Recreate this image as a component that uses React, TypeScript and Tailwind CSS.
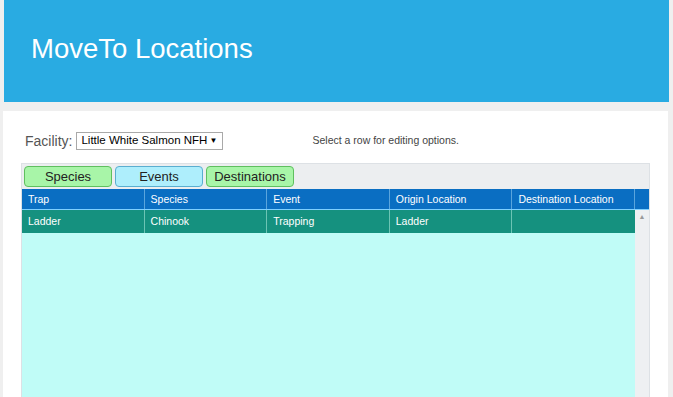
import React from "react";

const COLUMNS = ["Trap", "Species", "Event", "Origin Location", "Destination Location"];
const ROWS = [["Ladder", "Chinook", "Trapping", "Ladder", ""]];

const TABS = [
  { label: "Species", cls: "bg-[#a8f5a8] border-[#5fbf5f]" },
  { label: "Events", cls: "bg-[#aeeefc] border-[#5aaed0]" },
  { label: "Destinations", cls: "bg-[#a8f5a8] border-[#5fbf5f]" },
];

export default function App() {
  return (
    <div className="w-[673px] h-[397px] overflow-hidden bg-[#efefef] font-['Liberation_Sans',Arial,sans-serif]">
      <header className="mx-[4px] h-[102px] bg-[#29abe2] flex items-center pl-[27px] pb-[4px]">
        <h1 className="text-[27.5px] text-white leading-none">MoveTo Locations</h1>
      </header>

      <main className="ml-[3px] mr-[5px] mt-[9px] h-[290px] bg-white pl-[18px] pr-[18px] pt-[21px]">
        {/* toolbar */}
        <div className="flex items-center h-[18px]">
          <span className="ml-[4px] text-[14px] text-[#555]">Facility:</span>
          <div className="ml-[4px] w-[147px] h-[18px] border border-[#a9a9a9] flex items-center justify-between pl-[4px] pr-[5px] text-[11.5px] text-black whitespace-nowrap">
            <span>Little White Salmon NFH</span>
            <span className="text-[8px]">▼</span>
          </div>
          <span className="ml-[89px] text-[10.5px] text-[#444]">Select a row for editing options.</span>
        </div>

        {/* grid */}
        <div className="mt-[13px] w-[629px] h-[240px] border border-[#dde1e5] bg-[#eceef0] flex flex-col">
          <div className="flex gap-[3px] px-[2px] pt-[2px] h-[25px]">
            {TABS.map((t) => (
              <div
                key={t.label}
                className={`w-[88px] h-[21px] rounded-[4px] border text-[13px] text-[#222] flex items-center justify-center ${t.cls}`}
              >
                {t.label}
              </div>
            ))}
          </div>

          <div className="flex h-[20px] bg-[#0a6ec2] text-white text-[10.5px]">
            {COLUMNS.map((c) => (
              <div key={c} className="w-[122.6px] border-r border-[#5aa5dd] flex items-center pl-[6px] pt-[1px]">
                {c}
              </div>
            ))}
            <div className="flex-1" />
          </div>

          <div className="flex flex-1 border-t border-[#7fd0ff]">
            <div className="w-[613px] bg-[#c0fcf7]">
              {ROWS.map((r, i) => (
                <div key={i} className="flex h-[23px] bg-[#15917f] text-white text-[10.5px]">
                  {r.map((v, j) => (
                    <div
                      key={j}
                      className="w-[122.6px] border-r border-[#6cc4b4] last:border-r-0 flex items-center pl-[6px]"
                    >
                      {v}
                    </div>
                  ))}
                </div>
              ))}
            </div>
            <div className="flex-1 bg-[#eef0f2] flex justify-center pt-[3px]">
              <span className="text-[7px] text-[#999] leading-none">▲</span>
            </div>
          </div>
        </div>
      </main>
    </div>
  );
}
